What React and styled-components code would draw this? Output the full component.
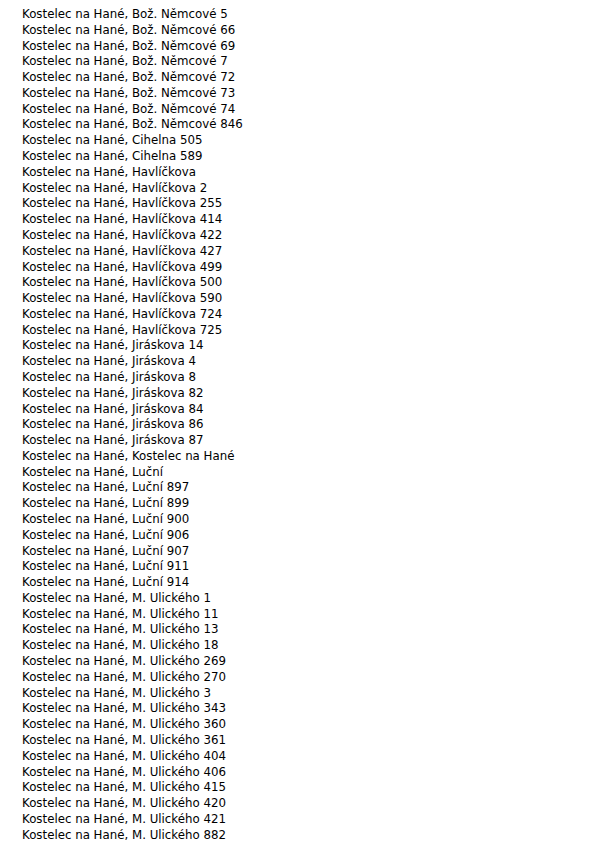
import styled, { createGlobalStyle } from "styled-components";

const GlobalStyle = createGlobalStyle`
  body {
    margin: 0;
    background: #ffffff;
  }
`;

const entries = [
  "Bož. Němcové 5",
  "Bož. Němcové 66",
  "Bož. Němcové 69",
  "Bož. Němcové 7",
  "Bož. Němcové 72",
  "Bož. Němcové 73",
  "Bož. Němcové 74",
  "Bož. Němcové 846",
  "Cihelna 505",
  "Cihelna 589",
  "Havlíčkova",
  "Havlíčkova 2",
  "Havlíčkova 255",
  "Havlíčkova 414",
  "Havlíčkova 422",
  "Havlíčkova 427",
  "Havlíčkova 499",
  "Havlíčkova 500",
  "Havlíčkova 590",
  "Havlíčkova 724",
  "Havlíčkova 725",
  "Jiráskova 14",
  "Jiráskova 4",
  "Jiráskova 8",
  "Jiráskova 82",
  "Jiráskova 84",
  "Jiráskova 86",
  "Jiráskova 87",
  "Kostelec na Hané",
  "Luční",
  "Luční 897",
  "Luční 899",
  "Luční 900",
  "Luční 906",
  "Luční 907",
  "Luční 911",
  "Luční 914",
  "M. Ulického 1",
  "M. Ulického 11",
  "M. Ulického 13",
  "M. Ulického 18",
  "M. Ulického 269",
  "M. Ulického 270",
  "M. Ulického 3",
  "M. Ulického 343",
  "M. Ulického 360",
  "M. Ulického 361",
  "M. Ulického 404",
  "M. Ulického 406",
  "M. Ulického 415",
  "M. Ulického 420",
  "M. Ulického 421",
  "M. Ulického 882",
];

const AddressList = styled.ul`
  list-style: none;
  margin: 0;
  padding: 7px 0 0 22px;
  font-family: "DejaVu Sans", sans-serif;
  font-size: 11.8px;
  line-height: 15.78px;
  color: #000000;
`;

const AddressItem = styled.li`
  white-space: nowrap;
`;

const App = () => {
  return (
    <>
      <GlobalStyle />
      <AddressList>
        {entries.map((street, index) => (
          <AddressItem key={index}>Kostelec na Hané, {street}</AddressItem>
        ))}
      </AddressList>
    </>
  );
};

export default App;
